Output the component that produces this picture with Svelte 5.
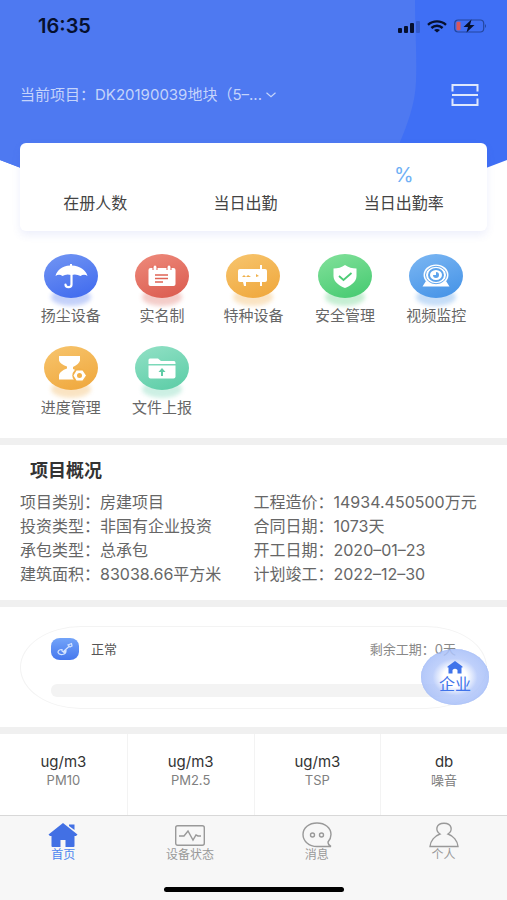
<script lang="ts">
  const project = "DK20190039地块（5–...";

  const stats = [
    { label: "在册人数", value: "" },
    { label: "当日出勤", value: "" },
    { label: "当日出勤率", value: "%" },
  ];

  const menus = [
    { icon: "umbrella", label: "扬尘设备", color: "blue" },
    { icon: "calendar", label: "实名制", color: "red" },
    { icon: "machine", label: "特种设备", color: "orange" },
    { icon: "shield", label: "安全管理", color: "green" },
    { icon: "camera", label: "视频监控", color: "sky" },
    { icon: "hourglass", label: "进度管理", color: "orange" },
    { icon: "folder", label: "文件上报", color: "mint" },
  ];

  const overview = [
    ["项目类别", "房建项目"],
    ["工程造价", "14934.450500万元"],
    ["投资类型", "非国有企业投资"],
    ["合同日期", "1073天"],
    ["承包类型", "总承包"],
    ["开工日期", "2020–01–23"],
    ["建筑面积", "83038.66平方米"],
    ["计划竣工", "2022–12–30"],
  ];

  const sensors = [
    { unit: "ug/m3", name: "PM10" },
    { unit: "ug/m3", name: "PM2.5" },
    { unit: "ug/m3", name: "TSP" },
    { unit: "db", name: "噪音" },
  ];

  const tabs = [
    { id: "home", label: "首页" },
    { id: "device", label: "设备状态" },
    { id: "message", label: "消息" },
    { id: "user", label: "个人" },
  ];

  let activeTab = $state("home");
  let progress = $state(0);
</script>

<div class="page">
  <header class="header">
    <div class="backdrop">
      <svg viewBox="0 0 507 168" preserveAspectRatio="none" aria-hidden="true">
        <path d="M0 0H507V160L486 168H21L0 160Z" fill="#3f6ff5" />
        <path d="M0 0H415C415 30 417 55 416 82C415 105 407 125 400 142V168H21L0 160Z" fill="#4e79f1" />
      </svg>
    </div>

    <div class="status-bar">
      <span class="clock">16:35</span>
      <div class="status-icons">
        <svg width="22" height="13" viewBox="0 0 22 13" fill="#06102e">
          <rect x="0" y="8" width="4" height="5" rx="1" />
          <rect x="6" y="6" width="4" height="7" rx="1" />
          <rect x="12" y="3" width="4" height="10" rx="1" />
          <rect x="18" y="1" width="4" height="12" rx="1" opacity="0.2" />
        </svg>
        <svg width="20" height="13" viewBox="0 0 20 13" fill="none" stroke="#06102e" stroke-width="2.4">
          <path d="M1 4.8C6 0.2 14 0.2 19 4.8" />
          <path d="M4.4 8C7.6 5 12.4 5 15.6 8" />
          <path d="M7 10Q10 8 13 10L10 12.6Z" fill="#06102e" stroke="none" />
        </svg>
        <svg width="33" height="14" viewBox="0 0 33 14">
          <rect x="0.7" y="1" width="29" height="12" rx="3.5" fill="none" stroke="#24479f" stroke-width="1.2" />
          <rect x="2.5" y="2.8" width="4" height="8.4" rx="1" fill="#d9565b" />
          <path d="M31 5Q33 7 31 9Z" fill="#24479f" />
          <path d="M17.5 0.5L9.5 8H14L12.5 13.5L20.5 6H16Z" fill="#06102e" />
        </svg>
      </div>
    </div>

    <div class="project-bar">
      <button class="project">
        <span>当前项目：{project}</span>
        <svg width="10" height="6" viewBox="0 0 10 6" fill="none" stroke="#c5d4fb" stroke-width="1.2">
          <path d="M0.5 0.8L5 4.6L9.5 0.8" />
        </svg>
      </button>
      <button class="scan" aria-label="扫一扫">
        <svg width="28" height="24" viewBox="0 0 28 24" fill="none" stroke="#dfe7fd" stroke-width="2">
          <path d="M1.5 8.5V2H26.5V8.5M1.5 15.5V22H26.5V15.5M1 12H27" />
        </svg>
      </button>
    </div>

    <div class="stats">
      {#each stats as stat}
        <div class="stat">
          <span class="stat-value">{stat.value}</span>
          <span class="stat-label">{stat.label}</span>
        </div>
      {/each}
    </div>
  </header>

  <nav class="menus">
    {#each menus as menu}
      <button class="menu">
        <span class="bubble {menu.color}">
          <svg width="54" height="44" viewBox="0 0 54 44" fill="#fff">
            {#if menu.icon === "umbrella"}
              <path d="M26 11.5V10H28V11.5C36 12 42 16 43.5 22Q40 19.5 36.5 22Q32 19.5 27.5 21Q22 19.5 18.5 22Q15 19.5 11.5 22C13 16 18 12 26 11.5Z" />
              <path d="M27.5 19V30.5C27.5 34 21.5 34 21.5 30.5" fill="none" stroke="#fff" stroke-width="2.2" stroke-linecap="round" />
            {:else if menu.icon === "calendar"}
              <rect x="13.5" y="14" width="27" height="18" rx="2" />
              <path d="M20 12V16M34 12V16" stroke="#df6456" stroke-width="5" />
              <path d="M20 13V15.5M34 13V15.5" stroke="#fff" stroke-width="3" stroke-linecap="round" />
              <path d="M20 21H33M20 24.5H33M20 28H28" stroke="#df6456" stroke-width="1.3" />
            {:else if menu.icon === "machine"}
              <rect x="12" y="15" width="29" height="13" rx="2" />
              <path d="M17 28H20V32H18ZM34 11H36V32H34Z" />
              <path d="M16 23L18 21L20 23L22 21L25 23ZM30 20L33 22L30 23Z" fill="#f0b04a" />
            {:else if menu.icon === "shield"}
              <path d="M27 11Q32 14.5 38.5 14.5V22C38.5 28 32 32 27 34C22 32 15.5 28 15.5 22V14.5Q22 14.5 27 11Z" />
              <path d="M21 22L25.5 26L33.5 19" fill="none" stroke="#4ccb75" stroke-width="1.8" />
            {:else if menu.icon === "camera"}
              <path d="M17 27Q27 34 37 27L40.500 32.500H13.500Z" />
              <ellipse cx="27" cy="21" rx="12.500" ry="10.500" />
              <ellipse cx="27" cy="21" rx="10.500" ry="8.700" fill="none" stroke="#5ea4ec" />
              <ellipse cx="27" cy="21" rx="7" ry="6" fill="none" stroke="#5ea4ec" stroke-width="2" />
              <path d="M27 18V21H24Q24 24 27 24T30 21T27 18Z" fill="#5ea4ec" />
            {:else if menu.icon === "hourglass"}
              <path d="M15 10H36V14.5Q35 18 29 21V23Q33 24 34 27L30 33.5H15V29Q16 25 23 22.5V20.5Q16 18 15 14.5Z" />
              <circle cx="35.5" cy="29.5" r="7.2" fill="#f2b04a" />
              <path d="M32.5 24.5H38.5L42 29.5L38.5 34.5H32.5L29.5 29.5Z" />
              <circle cx="35.5" cy="29.5" r="2.5" fill="#f2b04a" />
            {:else}
              <path d="M13.5 14Q13.5 12.5 15 12.5H23L26 15H39Q40.5 15 40.5 17V18H13.5Z" />
              <path d="M13.5 19.5H40.5V30.5Q40.5 32.5 38.5 32.5H15.5Q13.5 32.5 13.5 30.5Z" />
              <path d="M27 22L30.5 26H28V30H26V26H23.5Z" fill="#5fcba6" />
            {/if}
          </svg>
        </span>
        <span class="menu-label">{menu.label}</span>
      </button>
    {/each}
  </nav>

  <section class="overview">
    <h2>项目概况</h2>
    <dl>
      {#each overview as [label, value]}
        <div>
          <dt>{label}：</dt>
          <dd>{value}</dd>
        </div>
      {/each}
    </dl>
  </section>

  <section class="schedule">
    <div class="schedule-card">
      <div class="schedule-head">
        <svg width="28" height="22" viewBox="0 0 28 22">
          <defs>
            <linearGradient id="badge" x1="0" y1="0" x2="0" y2="1">
              <stop offset="0" stop-color="#73a4f9" />
              <stop offset="1" stop-color="#4678ee" />
            </linearGradient>
          </defs>
          <rect width="28" height="22" rx="9" ry="8" fill="url(#badge)" />
          <g fill="none" stroke="#d5e4ff" stroke-width="1.2">
            <path d="M11 11.5Q7 11.5 7 14.5Q8 17 11.5 16.5Q15 16 15 13L13 14.5L11 13ZM12.5 13.5L18.5 8" />
            <path d="M17 7L20.5 5.5L21 8L19 9Z" />
          </g>
        </svg>
        <span class="state">正常</span>
        <span class="remaining">剩余工期：0天</span>
      </div>
      <div class="track">
        <div class="fill" style="width: {progress}%"></div>
      </div>
    </div>
    <button class="company">
      <svg width="16" height="13" viewBox="0 0 16 13" fill="#3f73ea">
        <path d="M8 0L15.5 5.5V6.5H14.5V12.5H10.5V9Q8 6.5 5.5 9V12.5H1.5V6.5H0.5V5.5Z" />
      </svg>
      <span>企业</span>
    </button>
  </section>

  <section class="sensors">
    {#each sensors as sensor}
      <div class="sensor">
        <span class="unit">{sensor.unit}</span>
        <span class="name">{sensor.name}</span>
      </div>
    {/each}
  </section>

  <footer class="tab-bar">
    <nav class="tabs">
      {#each tabs as tab}
        <a
          href="#{tab.id}"
          class="tab"
          class:active={activeTab === tab.id}
          onclick={() => (activeTab = tab.id)}
        >
          <svg width="30" height="26" viewBox="0 0 30 26" fill="none" stroke="currentColor" stroke-width="1.4">
            {#if tab.id === "home"}
              <path d="M15 1L29.5 12.5L28 14H26.5V24Q26.5 25 25.5 25H17.5V18H12.5V25H4.5Q3.5 25 3.5 24V14H2L0.5 12.5ZM21 2.5H26.5V8L21 4Z" fill="#4270e4" stroke="none" />
            {:else if tab.id === "device"}
              <rect x="0.7" y="3.7" width="28.6" height="19.6" rx="2" />
              <path d="M4 14H9L13 9L18 18L21 13L23 14H26" />
            {:else if tab.id === "message"}
              <path d="M26 20Q29 16.5 29 12.5C29 6 23 1 15 1S1 6 1 12.5S7 24.5 15 24.5H29Q26 23 26 20Z" />
              <circle cx="10.5" cy="13" r="2" />
              <circle cx="19.5" cy="13" r="2" />
            {:else}
              <path d="M11 12C5.5 14 1.5 19 1 24.5H29C28.5 19 24.5 14 19 12C22 10 22.5 7.5 22 5.5C20.5 -0.2 9.5 -0.2 8 5.5C7.5 7.5 8 10 11 12Z" />
            {/if}
          </svg>
          <span>{tab.label}</span>
        </a>
      {/each}
    </nav>
    <div class="home-indicator"></div>
  </footer>
</div>

<style>
  :global(body) {
    margin: 0;
    background: #fff;
  }

  .page {
    display: flex;
    flex-direction: column;
    min-height: 100vh;
    font-family: Inter, "Noto Sans CJK SC", sans-serif;
    color: #666;
  }

  button {
    padding: 0;
    border: none;
    background: none;
    font-family: inherit;
    color: inherit;
    cursor: pointer;
  }

  svg {
    display: block;
    flex-shrink: 0;
  }

  .header {
    position: relative;
    padding: 14px 20px 0;
  }

  .backdrop {
    position: absolute;
    inset: 0 0 auto;
    z-index: -1;
  }

  .backdrop svg {
    width: 100%;
    height: 168px;
  }

  .status-bar {
    display: flex;
    align-items: center;
    justify-content: space-between;
    height: 24px;
    padding-left: 18px;
  }

  .clock {
    font-size: 20px;
    font-weight: 600;
    line-height: 24px;
    color: #06102e;
  }

  .status-icons {
    display: flex;
    align-items: center;
    gap: 7px;
  }

  .project-bar {
    display: flex;
    align-items: center;
    justify-content: space-between;
    padding: 45px 8px 36px 0;
  }

  .project {
    display: flex;
    align-items: center;
    gap: 4px;
    font-size: 15px;
    line-height: 24px;
    color: #c5d4fb;
  }

  .stats {
    display: flex;
    justify-content: space-around;
    height: 88px;
    border-radius: 6px;
    background: #fff;
    box-shadow: 0 4px 8px rgba(80, 100, 220, 0.1);
  }

  .stat {
    display: flex;
    flex-direction: column;
    align-items: center;
    padding-top: 20px;
  }

  .stat-value {
    height: 28px;
    font-size: 20px;
    line-height: 24px;
    color: #6fb0f5;
  }

  .stat-label {
    font-size: 16px;
    line-height: 24px;
    color: #444;
  }

  .menus {
    display: grid;
    grid-template-columns: repeat(5, 1fr);
    row-gap: 20px;
    padding: 23px 25px 20px;
  }

  .menu {
    display: flex;
    flex-direction: column;
    align-items: center;
    gap: 8px;
  }

  .bubble {
    position: relative;
    width: 54px;
    height: 44px;
    border-radius: 50%;
    background: linear-gradient(160deg, var(--light), var(--dark));
  }

  .bubble::after {
    content: "";
    position: absolute;
    inset: 34px 7px -8px;
    z-index: -1;
    border-radius: 50%;
    background: var(--dark);
    filter: blur(2px);
    opacity: 0.3;
  }

  .blue {
    --light: #7396f3;
    --dark: #3d68ee;
  }

  .red {
    --light: #ee8b7c;
    --dark: #da594d;
  }

  .orange {
    --light: #f7c56e;
    --dark: #efa63a;
  }

  .green {
    --light: #83e19b;
    --dark: #43c96f;
  }

  .sky {
    --light: #7cb7f3;
    --dark: #4291e6;
  }

  .mint {
    --light: #93e1c6;
    --dark: #59cca5;
  }

  .menu-label {
    font-size: 15px;
    line-height: 20px;
  }

  .overview {
    padding: 14px 20px;
    border-top: 7px solid #f0f0f0;
    border-bottom: 7px solid #f0f0f0;
  }

  h2 {
    margin: 0 0 7px;
    padding-left: 10px;
    font-size: 18px;
    font-weight: 600;
    line-height: 24px;
    color: #333;
  }

  dl {
    display: grid;
    grid-template-columns: 1fr 1fr;
    margin: 0;
    font-size: 16px;
    line-height: 24px;
    white-space: nowrap;
  }

  dl div {
    display: flex;
  }

  dd {
    margin: 0;
  }

  .schedule {
    position: relative;
    padding: 19px 20px 18px;
    border-bottom: 7px solid #f0f0f0;
  }

  .schedule-card {
    padding: 11px 30px;
    border: 1px solid #f3f3f3;
    border-radius: 62px / 42px;
  }

  .schedule-head {
    display: flex;
    align-items: center;
    font-size: 13px;
    line-height: 22px;
  }

  .state {
    margin-left: 12px;
    color: #555;
  }

  .remaining {
    margin-left: auto;
    color: #888;
  }

  .track {
    height: 13px;
    margin-top: 24px;
    border-radius: 6px;
    background: #f3f3f3;
    overflow: hidden;
  }

  .fill {
    height: 100%;
    background: #4678ee;
  }

  .company {
    position: absolute;
    right: 18px;
    top: 42px;
    display: flex;
    flex-direction: column;
    align-items: center;
    justify-content: center;
    width: 68px;
    height: 56px;
    border-radius: 50%;
    background: radial-gradient(closest-side, #fff 35%, rgba(180, 200, 250, 0.85) 66%, rgba(166, 190, 248, 0.85));
    box-shadow: inset 0 0 1px #8eabf2;
    font-size: 16px;
    line-height: 20px;
    color: #3f73ea;
  }

  .sensors {
    display: grid;
    grid-template-columns: repeat(4, 1fr);
    flex-grow: 1;
  }

  .sensor {
    display: flex;
    flex-direction: column;
    align-items: center;
    padding: 19px 0 26px;
  }

  .sensor + .sensor {
    border-left: 1px solid #f3f3f3;
  }

  .unit {
    font-size: 15px;
    line-height: 18px;
    color: #333;
  }

  .name {
    font-size: 13px;
    line-height: 18px;
    color: #808080;
  }

  .tab-bar {
    border-top: 1px solid #d8d8d8;
    background: #f7f7f7;
  }

  .tabs {
    display: grid;
    grid-template-columns: repeat(4, 1fr);
    padding-top: 6px;
  }

  .tab {
    display: flex;
    flex-direction: column;
    align-items: center;
    font-size: 12px;
    line-height: 14px;
    color: #999;
    text-decoration: none;
  }

  .tab.active {
    color: #4d86ef;
  }

  .home-indicator {
    width: 180px;
    height: 5px;
    margin: 25px auto 8px;
    border-radius: 3px;
    background: #000;
  }
</style>
